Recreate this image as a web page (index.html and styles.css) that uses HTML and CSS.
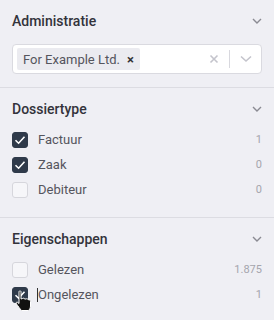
FILE: index.html
```html
<!DOCTYPE html>
<html lang="nl">
<head>
<meta charset="utf-8">
<link rel="stylesheet" href="styles.css">
</head>
<body>
<div class="panel">
  <section class="section first">
    <div class="head">
      <span class="title">Administratie</span>
      <svg class="chev" width="10" height="6" viewBox="0 0 10 6"><path d="M1 1 L5 5 L9 1" fill="none" stroke="#8a8a92" stroke-width="1.4"/></svg>
    </div>
    <div class="select">
      <div class="tag"><span class="tag-text">For Example Ltd.</span><span class="tag-x">×</span></div>
      <div class="select-tools">
        <svg width="10" height="10" viewBox="0 0 10 10"><path d="M1.5 1.5 L8.5 8.5 M8.5 1.5 L1.5 8.5" stroke="#c4c4cc" stroke-width="1.6"/></svg>
        <span class="sep"></span>
        <svg width="12" height="8" viewBox="0 0 12 8"><path d="M1 1.5 L6 6 L11 1.5" fill="none" stroke="#c4c4cc" stroke-width="1.6"/></svg>
      </div>
    </div>
  </section>
  <section class="section">
    <div class="head">
      <span class="title">Dossiertype</span>
      <svg class="chev" width="10" height="6" viewBox="0 0 10 6"><path d="M1 1 L5 5 L9 1" fill="none" stroke="#8a8a92" stroke-width="1.4"/></svg>
    </div>
    <ul class="list">
      <li class="row"><span class="box checked"><svg width="12" height="10" viewBox="0 0 12 10"><path d="M1.5 5.2 L4.6 8.2 L10.5 1.8" fill="none" stroke="#fff" stroke-width="1.6"/></svg></span><span class="label">Factuur</span><span class="count">1</span></li>
      <li class="row"><span class="box checked"><svg width="12" height="10" viewBox="0 0 12 10"><path d="M1.5 5.2 L4.6 8.2 L10.5 1.8" fill="none" stroke="#fff" stroke-width="1.6"/></svg></span><span class="label">Zaak</span><span class="count">0</span></li>
      <li class="row"><span class="box"></span><span class="label">Debiteur</span><span class="count">0</span></li>
    </ul>
  </section>
  <section class="section last">
    <div class="head">
      <span class="title">Eigenschappen</span>
      <svg class="chev" width="10" height="6" viewBox="0 0 10 6"><path d="M1 1 L5 5 L9 1" fill="none" stroke="#8a8a92" stroke-width="1.4"/></svg>
    </div>
    <ul class="list">
      <li class="row"><span class="box"></span><span class="label">Gelezen</span><span class="count">1.875</span></li>
      <li class="row"><span class="box checked"><svg width="12" height="10" viewBox="0 0 12 10"><path d="M1.5 5.2 L4.6 8.2 L10.5 1.8" fill="none" stroke="#fff" stroke-width="1.6"/></svg>
        <svg class="cursor" width="18" height="22" viewBox="0 0 18 22"><path d="M5 1.5 C5 0.8 7 0.8 7 1.5 L7 9 L8.5 8.5 C9 8 10.5 8 10.5 9 L12 9 C12.5 8.6 14 8.6 14 9.6 L15 9.8 C16 9.8 16.5 10.5 16.5 11.5 L16.5 16 C16.5 18 15.5 19.5 14.5 20.5 L7.5 20.5 C6 19 4 16 2.5 14 C1.5 12.8 2.5 11.5 3.8 12.4 L5 13.5 Z" fill="#111" stroke="#fff" stroke-width="1"/></svg></span><span class="label"><span class="caret"></span>Ongelezen</span><span class="count">1</span></li>
    </ul>
  </section>
</div>
</body>
</html>
```
FILE: styles.css
```css
html, body {
  margin: 0;
  padding: 0;
  background: #efeff4;
}
body {
  font-family: Roboto, "Noto Sans", Arial, sans-serif;
  color: #3d3d45;
}
.panel {
  width: 274px;
}
.section {
  padding: 12px 12px 15px 12px;
  border-bottom: 1px solid #dcdce2;
}
.section.first {
  padding-bottom: 13px;
}
.section.last {
  border-bottom: none;
}
.head {
  display: flex;
  align-items: center;
  justify-content: space-between;
  height: 18px;
}
.title {
  font-size: 14px;
  font-weight: 500;
  color: #33333b;
  line-height: 18px;
}
.select {
  margin-top: 14px;
  height: 30px;
  box-sizing: border-box;
  border: 1px solid #dadae0;
  border-radius: 4px;
  background: #fff;
  display: flex;
  align-items: center;
  padding: 0 4px;
}
.tag {
  display: flex;
  align-items: center;
  height: 22px;
  background: #ebebf0;
  border-radius: 2px;
  padding: 0 6px 0 6px;
  font-size: 13px;
  color: #55555d;
  width: 123px;
  box-sizing: border-box;
  white-space: nowrap;
}
.tag-x {
  margin-left: auto;
  font-size: 13px;
  font-weight: 700;
  color: #333;
}
.select-tools {
  margin-left: auto;
  display: flex;
  align-items: center;
  gap: 10px;
  padding-right: 5px;
}
.sep {
  width: 1px;
  height: 18px;
  background: #d8d8de;
}
.list {
  list-style: none;
  margin: 9px 0 0 0;
  padding: 0;
}
.row {
  display: flex;
  align-items: center;
  height: 25px;
}
.box {
  position: relative;
  width: 16px;
  height: 16px;
  box-sizing: border-box;
  border: 1px solid #d6d6dc;
  border-radius: 3px;
  background: #f6f6f9;
  display: flex;
  align-items: center;
  justify-content: center;
}
.box.checked {
  background: #2f3a4a;
  border-color: #2f3a4a;
}
.label {
  margin-left: 10px;
  font-size: 13px;
  color: #55555d;
  position: relative;
}
.count {
  margin-left: auto;
  font-size: 11px;
  color: #a5a5ad;
}
.caret {
  position: absolute;
  left: -1px;
  top: 1px;
  width: 1px;
  height: 14px;
  background: #333;
}
.cursor {
  position: absolute;
  left: 1px;
  top: 2px;
}
```
